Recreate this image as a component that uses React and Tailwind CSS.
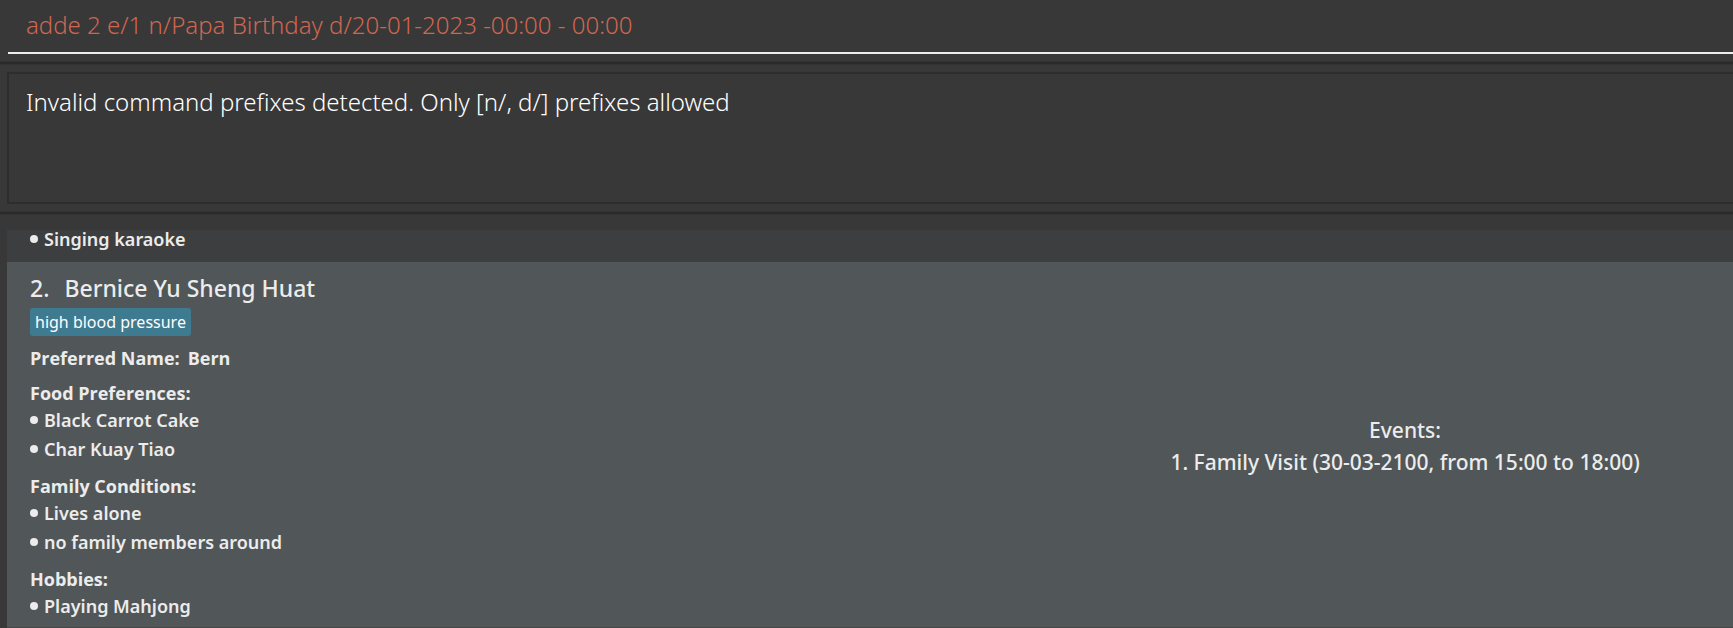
const sections = [
  { title: "Food Preferences:", items: ["Black Carrot Cake", "Char Kuay Tiao"] },
  { title: "Family Conditions:", items: ["Lives alone", "no family members around"] },
  { title: "Hobbies:", items: ["Playing Mahjong"] },
];

const events = ["Family Visit (30-03-2100, from 15:00 to 18:00)"];

function Divider() {
  return <div className="h-1 border-y border-[#333333] bg-[#2a2a2a]" />;
}

function Bullets({ items }) {
  return (
    <ul>
      {items.map((item) => (
        <li key={item} className="flex h-[29px] items-center gap-1.5 pb-1">
          <span aria-hidden="true" className="size-2 rounded-full bg-[#ececec]" />
          {item}
        </li>
      ))}
    </ul>
  );
}

export default function App() {
  return (
    <div className="flex h-screen flex-col overflow-hidden bg-[#383838] font-['Noto_Sans','Open_Sans',sans-serif] text-[#ececec]">
      <form className="pl-2 pt-px" onSubmit={(e) => e.preventDefault()}>
        <input
          aria-label="Command"
          defaultValue="adde 2 e/1 n/Papa Birthday d/20-01-2023 -00:00 - 00:00"
          className="block h-[53px] w-full border-b-2 border-[#ececec] pb-1 pl-[18px] text-2xl font-light text-[#d06651] outline-none"
        />
      </form>
      <div className="pt-[7px]">
        <Divider />
      </div>
      <div className="py-[7px] pl-[7px]">
        <textarea
          aria-label="Result"
          readOnly
          value="Invalid command prefixes detected. Only [n/, d/] prefixes allowed"
          className="block h-[132px] w-full resize-none border-y-2 border-l-2 border-[#2d2d2d] px-[17px] py-3 text-2xl font-light text-white outline-none"
        />
      </div>
      <Divider />
      <main className="mt-[15px] ml-[7px] flex min-h-0 flex-1 flex-col text-lg font-semibold">
        <section className="flex h-8 shrink-0 flex-col justify-end bg-[#3c3e3f] pl-[23px] pb-[7px]">
          <Bullets items={["Singing karaoke"]} />
        </section>
        <section className="grid min-h-[365px] shrink-0 grid-cols-[62fr_38fr] bg-[#515658]">
          <div className="pt-3 pl-[23px]">
            <h2 className="flex h-[34px] gap-[15px] text-[23px] leading-7 font-medium">
              <span>2.</span>
              <span>Bernice Yu Sheng Huat</span>
            </h2>
            <span className="flex h-7 w-fit items-center rounded-[3px] bg-[#3e7b91] px-[5px] text-base font-normal text-white">
              high blood pressure
            </span>
            <dl>
              <div className="flex gap-2 pt-2 font-['Open_Sans',sans-serif] font-bold leading-7">
                <dt>Preferred Name:</dt>
                <dd>Bern</dd>
              </div>
              {sections.map((section) => (
                <div key={section.title} className="pt-2">
                  <dt className="font-['Open_Sans',sans-serif] font-bold leading-[27px]">{section.title}</dt>
                  <dd>
                    <Bullets items={section.items} />
                  </dd>
                </div>
              ))}
            </dl>
          </div>
          <div className="flex flex-col items-center pt-[152px] text-[21px] leading-8 font-medium">
            <h3>Events:</h3>
            {events.map((event, i) => (
              <p key={event}>{`${i + 1}. ${event}`}</p>
            ))}
          </div>
        </section>
        <div className="flex-1 bg-[#444849]" />
      </main>
    </div>
  );
}
